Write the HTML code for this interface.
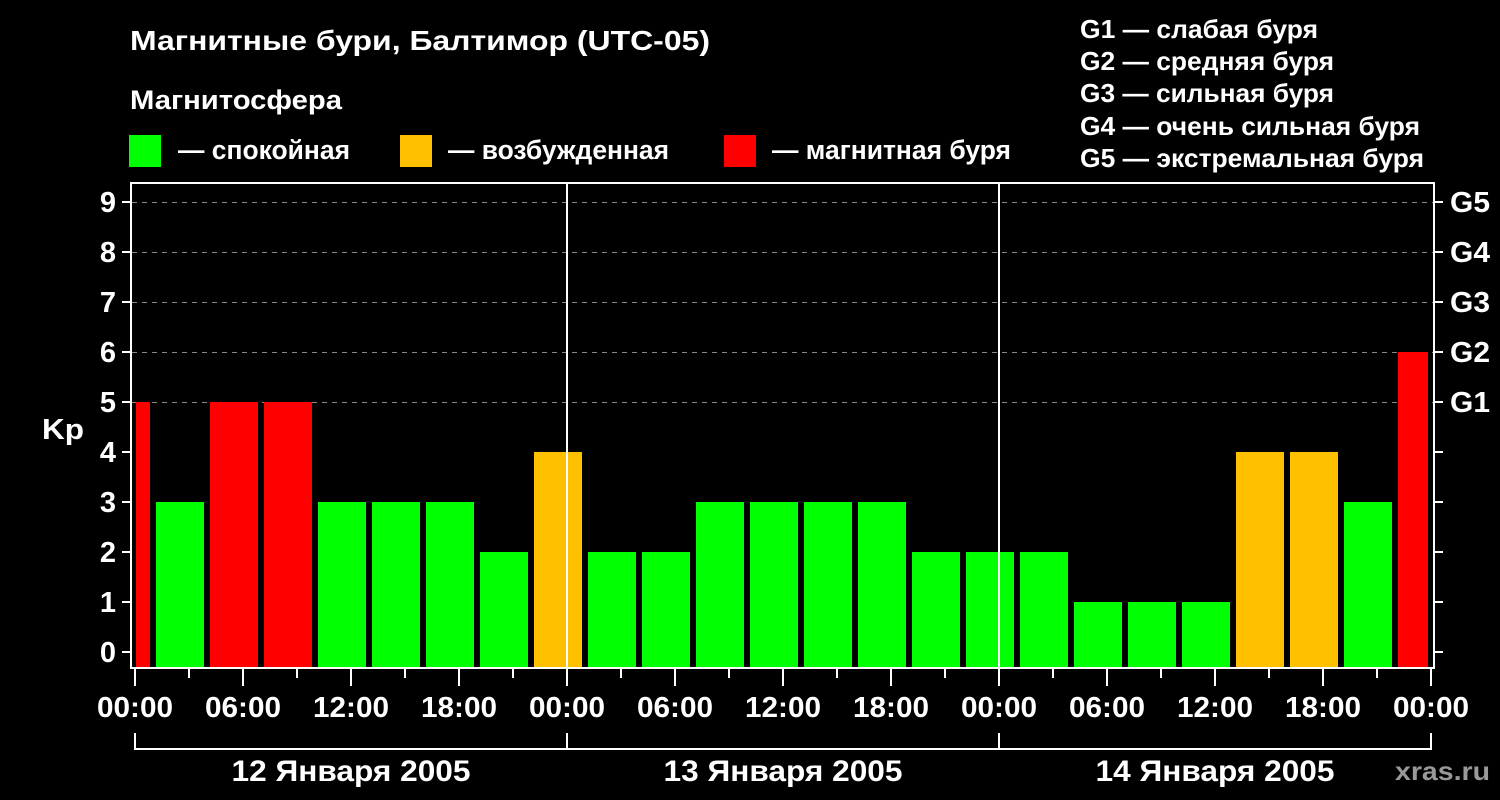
<!DOCTYPE html>
<html><head><meta charset="utf-8"><style>
html,body{margin:0;padding:0;background:#000;width:1500px;height:800px;overflow:hidden}
svg{display:block}
text{font-family:"Liberation Sans",sans-serif;font-weight:bold;fill:#fff}
</style></head><body>
<svg width="1500" height="800" viewBox="0 0 1500 800" xmlns="http://www.w3.org/2000/svg">
<rect width="1500" height="800" fill="#000"/>
<text x="130" y="50" font-size="28" textLength="580" lengthAdjust="spacingAndGlyphs">Магнитные бури, Балтимор (UTC-05)</text>
<text x="130" y="109" font-size="27" textLength="212" lengthAdjust="spacingAndGlyphs">Магнитосфера</text>
<rect x="129" y="135" width="32" height="32" fill="#00ff00"/>
<text x="178" y="159" font-size="27" textLength="172" lengthAdjust="spacingAndGlyphs">— спокойная</text>
<rect x="400" y="135" width="32" height="32" fill="#ffc000"/>
<text x="448" y="159" font-size="27" textLength="221" lengthAdjust="spacingAndGlyphs">— возбужденная</text>
<rect x="724" y="135" width="32" height="32" fill="#ff0000"/>
<text x="772" y="159" font-size="27" textLength="239" lengthAdjust="spacingAndGlyphs">— магнитная буря</text>
<g font-size="26">
<text x="1080" y="38" textLength="238" lengthAdjust="spacingAndGlyphs">G1 — слабая буря</text>
<text x="1080" y="70" textLength="254" lengthAdjust="spacingAndGlyphs">G2 — средняя буря</text>
<text x="1080" y="102" textLength="254" lengthAdjust="spacingAndGlyphs">G3 — сильная буря</text>
<text x="1080" y="135" textLength="340" lengthAdjust="spacingAndGlyphs">G4 — очень сильная буря</text>
<text x="1080" y="167" textLength="344" lengthAdjust="spacingAndGlyphs">G5 — экстремальная буря</text>
</g>
<g stroke="#888" stroke-width="1" stroke-dasharray="5,5">
<line x1="132" x2="1433" y1="202.5" y2="202.5"/><line x1="132" x2="1433" y1="252.5" y2="252.5"/>
<line x1="132" x2="1433" y1="302.5" y2="302.5"/><line x1="132" x2="1433" y1="352.5" y2="352.5"/>
<line x1="132" x2="1433" y1="402.5" y2="402.5"/>
</g>
<rect x="136" y="402" width="14" height="265" fill="#ff0000"/>
<rect x="156" y="502" width="48" height="165" fill="#00ff00"/>
<rect x="210" y="402" width="48" height="265" fill="#ff0000"/>
<rect x="264" y="402" width="48" height="265" fill="#ff0000"/>
<rect x="318" y="502" width="48" height="165" fill="#00ff00"/>
<rect x="372" y="502" width="48" height="165" fill="#00ff00"/>
<rect x="426" y="502" width="48" height="165" fill="#00ff00"/>
<rect x="480" y="552" width="48" height="115" fill="#00ff00"/>
<rect x="534" y="452" width="48" height="215" fill="#ffc000"/>
<rect x="588" y="552" width="48" height="115" fill="#00ff00"/>
<rect x="642" y="552" width="48" height="115" fill="#00ff00"/>
<rect x="696" y="502" width="48" height="165" fill="#00ff00"/>
<rect x="750" y="502" width="48" height="165" fill="#00ff00"/>
<rect x="804" y="502" width="48" height="165" fill="#00ff00"/>
<rect x="858" y="502" width="48" height="165" fill="#00ff00"/>
<rect x="912" y="552" width="48" height="115" fill="#00ff00"/>
<rect x="966" y="552" width="48" height="115" fill="#00ff00"/>
<rect x="1020" y="552" width="48" height="115" fill="#00ff00"/>
<rect x="1074" y="602" width="48" height="65" fill="#00ff00"/>
<rect x="1128" y="602" width="48" height="65" fill="#00ff00"/>
<rect x="1182" y="602" width="48" height="65" fill="#00ff00"/>
<rect x="1236" y="452" width="48" height="215" fill="#ffc000"/>
<rect x="1290" y="452" width="48" height="215" fill="#ffc000"/>
<rect x="1344" y="502" width="48" height="165" fill="#00ff00"/>
<rect x="1398" y="352" width="30" height="315" fill="#ff0000"/>
<g stroke="#fff" stroke-width="2" fill="none">
<rect x="131" y="183" width="1303" height="485"/>
<line x1="567" x2="567" y1="183" y2="668"/>
<line x1="999" x2="999" y1="183" y2="668"/>
</g>
<g stroke="#fff" stroke-width="2">
<line x1="122" x2="131" y1="202" y2="202"/><line x1="122" x2="131" y1="252" y2="252"/>
<line x1="122" x2="131" y1="302" y2="302"/><line x1="122" x2="131" y1="352" y2="352"/>
<line x1="122" x2="131" y1="402" y2="402"/><line x1="122" x2="131" y1="452" y2="452"/>
<line x1="122" x2="131" y1="502" y2="502"/><line x1="122" x2="131" y1="552" y2="552"/>
<line x1="122" x2="131" y1="602" y2="602"/><line x1="122" x2="131" y1="652" y2="652"/>
<line x1="1434" x2="1443" y1="202" y2="202"/><line x1="1434" x2="1443" y1="252" y2="252"/>
<line x1="1434" x2="1443" y1="302" y2="302"/><line x1="1434" x2="1443" y1="352" y2="352"/>
<line x1="1434" x2="1443" y1="402" y2="402"/><line x1="1434" x2="1443" y1="452" y2="452"/>
<line x1="1434" x2="1443" y1="502" y2="502"/><line x1="1434" x2="1443" y1="552" y2="552"/>
<line x1="1434" x2="1443" y1="602" y2="602"/><line x1="1434" x2="1443" y1="652" y2="652"/>
</g>
<g font-size="29" text-anchor="end">
<text x="116" y="212">9</text><text x="116" y="262">8</text><text x="116" y="312">7</text>
<text x="116" y="362">6</text><text x="116" y="412">5</text><text x="116" y="462">4</text>
<text x="116" y="512">3</text><text x="116" y="562">2</text><text x="116" y="612">1</text>
<text x="116" y="662">0</text>
</g>
<text x="42" y="439" font-size="29" textLength="42" lengthAdjust="spacingAndGlyphs">Kp</text>
<g font-size="29">
<text x="1450" y="212" textLength="40" lengthAdjust="spacingAndGlyphs">G5</text><text x="1450" y="262" textLength="40" lengthAdjust="spacingAndGlyphs">G4</text><text x="1450" y="312" textLength="40" lengthAdjust="spacingAndGlyphs">G3</text>
<text x="1450" y="362" textLength="40" lengthAdjust="spacingAndGlyphs">G2</text><text x="1450" y="412" textLength="40" lengthAdjust="spacingAndGlyphs">G1</text>
</g>
<g stroke="#fff" stroke-width="2">
<line x1="135" x2="135" y1="668" y2="686"/><line x1="189" x2="189" y1="668" y2="678"/>
<line x1="243" x2="243" y1="668" y2="686"/><line x1="297" x2="297" y1="668" y2="678"/>
<line x1="351" x2="351" y1="668" y2="686"/><line x1="405" x2="405" y1="668" y2="678"/>
<line x1="459" x2="459" y1="668" y2="686"/><line x1="513" x2="513" y1="668" y2="678"/>
<line x1="567" x2="567" y1="668" y2="686"/><line x1="621" x2="621" y1="668" y2="678"/>
<line x1="675" x2="675" y1="668" y2="686"/><line x1="729" x2="729" y1="668" y2="678"/>
<line x1="783" x2="783" y1="668" y2="686"/><line x1="837" x2="837" y1="668" y2="678"/>
<line x1="891" x2="891" y1="668" y2="686"/><line x1="945" x2="945" y1="668" y2="678"/>
<line x1="999" x2="999" y1="668" y2="686"/><line x1="1053" x2="1053" y1="668" y2="678"/>
<line x1="1107" x2="1107" y1="668" y2="686"/><line x1="1161" x2="1161" y1="668" y2="678"/>
<line x1="1215" x2="1215" y1="668" y2="686"/><line x1="1269" x2="1269" y1="668" y2="678"/>
<line x1="1323" x2="1323" y1="668" y2="686"/><line x1="1377" x2="1377" y1="668" y2="678"/>
<line x1="1431" x2="1431" y1="668" y2="686"/>
<line x1="135" x2="1431" y1="749" y2="749"/>
<line x1="135" x2="135" y1="733" y2="750"/><line x1="567" x2="567" y1="733" y2="750"/>
<line x1="999" x2="999" y1="733" y2="750"/><line x1="1431" x2="1431" y1="733" y2="750"/>
</g>
<g font-size="29" text-anchor="middle">
<text x="135" y="717" textLength="76" lengthAdjust="spacingAndGlyphs">00:00</text><text x="243" y="717" textLength="76" lengthAdjust="spacingAndGlyphs">06:00</text><text x="351" y="717" textLength="76" lengthAdjust="spacingAndGlyphs">12:00</text>
<text x="459" y="717" textLength="76" lengthAdjust="spacingAndGlyphs">18:00</text><text x="567" y="717" textLength="76" lengthAdjust="spacingAndGlyphs">00:00</text><text x="675" y="717" textLength="76" lengthAdjust="spacingAndGlyphs">06:00</text>
<text x="783" y="717" textLength="76" lengthAdjust="spacingAndGlyphs">12:00</text><text x="891" y="717" textLength="76" lengthAdjust="spacingAndGlyphs">18:00</text><text x="999" y="717" textLength="76" lengthAdjust="spacingAndGlyphs">00:00</text>
<text x="1107" y="717" textLength="76" lengthAdjust="spacingAndGlyphs">06:00</text><text x="1215" y="717" textLength="76" lengthAdjust="spacingAndGlyphs">12:00</text><text x="1323" y="717" textLength="76" lengthAdjust="spacingAndGlyphs">18:00</text>
<text x="1431" y="717" textLength="76" lengthAdjust="spacingAndGlyphs">00:00</text>
</g>
<g font-size="30" text-anchor="middle">
<text x="351" y="781" textLength="239" lengthAdjust="spacingAndGlyphs">12 Января 2005</text>
<text x="783" y="781" textLength="239" lengthAdjust="spacingAndGlyphs">13 Января 2005</text>
<text x="1215" y="781" textLength="239" lengthAdjust="spacingAndGlyphs">14 Января 2005</text>
</g>
<text x="1395" y="780" font-size="26" textLength="95" lengthAdjust="spacingAndGlyphs" style="fill:#999">xras.ru</text>
</svg>
</body></html>
